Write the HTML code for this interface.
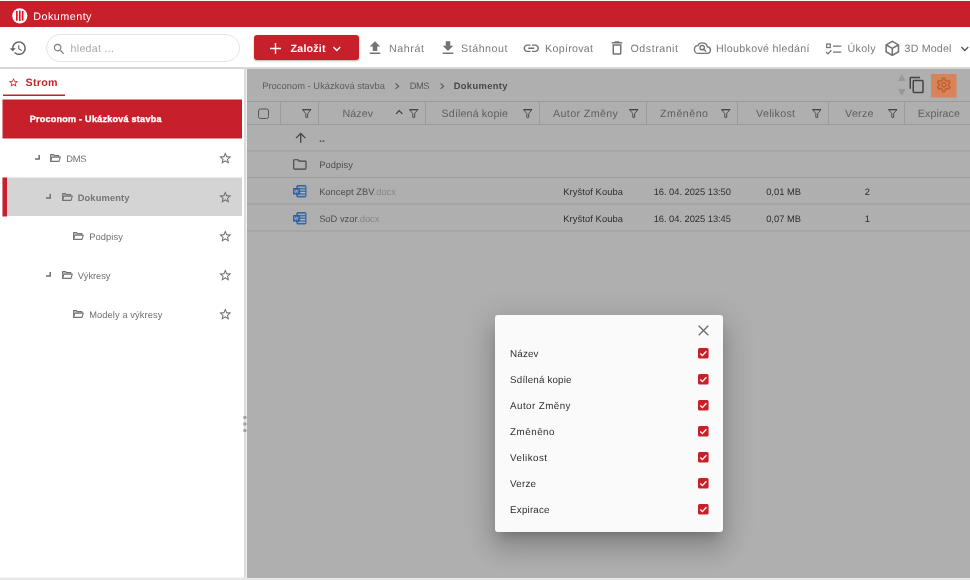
<!DOCTYPE html>
<html lang="cs">
<head>
<meta charset="utf-8">
<title>Dokumenty</title>
<style>
html,body{margin:0;padding:0;background:#fff;}
body{width:970px;height:580px;overflow:hidden;font-family:"Liberation Sans",Arial,sans-serif;text-rendering:geometricPrecision;}
#app{position:relative;width:970px;height:580px;overflow:hidden;background:#fff;will-change:transform;}
.t{position:absolute;white-space:nowrap;line-height:1;display:block;}
.i{position:absolute;display:block;overflow:visible;}
.b{position:absolute;display:block;}
.sb{-webkit-text-stroke:0.35px currentColor;}
</style>
</head>
<body>
<div id="app">

<svg class="i" style="left:0;top:0;width:970px;height:580px" viewBox="0 0 970 580" shape-rendering="geometricPrecision">
<rect x="0" y="1" width="970" height="26" fill="#c8202a"/>
<rect x="0" y="0" width="970" height="1" fill="#f4f8f8"/>
<rect x="3" y="94.5" width="62" height="1.5" fill="#c8202a"/>
<rect x="2.5" y="99.5" width="239.5" height="39" fill="#c8202a"/>
<rect x="2.5" y="177.5" width="239.5" height="38.5" fill="#d4d4d4"/>
<rect x="2.5" y="177.5" width="4.5" height="39" fill="#c8202a"/>
<rect x="244" y="69" width="2" height="509" fill="#dcdcdc"/>
<rect x="246" y="69" width="1" height="509" fill="#efefef"/>
<rect x="247" y="69" width="723" height="509" fill="#afafaf"/>
<rect x="247" y="68" width="723" height="1" fill="#c9c9c9"/>
<rect x="931" y="74" width="25.5" height="23.5" fill="#d9835a"/>
<rect x="247" y="101" width="723" height="1" fill="#9b9b9b"/>
<rect x="247" y="124" width="723" height="1" fill="#9b9b9b"/>
<rect x="247" y="150.5" width="723" height="1" fill="#9b9b9b"/>
<rect x="247" y="177" width="723" height="1" fill="#9b9b9b"/>
<rect x="247" y="203.5" width="723" height="1" fill="#9b9b9b"/>
<rect x="247" y="230.5" width="723" height="1" fill="#9b9b9b"/>
<rect x="280" y="101" width="1" height="23" fill="#9b9b9b"/>
<rect x="318" y="101" width="1" height="23" fill="#9b9b9b"/>
<rect x="425" y="101" width="1" height="23" fill="#9b9b9b"/>
<rect x="539" y="101" width="1" height="23" fill="#9b9b9b"/>
<rect x="646" y="101" width="1" height="23" fill="#9b9b9b"/>
<rect x="737" y="101" width="1" height="23" fill="#9b9b9b"/>
<rect x="828" y="101" width="1" height="23" fill="#9b9b9b"/>
<rect x="904" y="101" width="1" height="23" fill="#9b9b9b"/>
<rect x="0" y="577.6" width="970" height="2.4" fill="#e7e7e7"/>
<rect x="247" y="576.8" width="723" height="0.8" fill="#a6a6a6"/>
</svg>
<svg class="i" style="left:12px;top:8px;width:15.6px;height:15.6px" viewBox="0 0 16 16"><circle cx="8" cy="8" r="7.8" fill="#fff"/><rect x="4.1" y="3" width="1.7" height="10" fill="#e8111a"/><rect x="7.1" y="2.6" width="1.7" height="10.8" fill="#e8111a"/><rect x="10.1" y="3" width="1.7" height="10" fill="#e8111a"/></svg>
<span class="t" style="left:33.27px;top:12px;font-size:10.8px;letter-spacing:0.456px;color:#fff;">Dokumenty</span>
<svg class="i" style="left:9.2px;top:38.6px;width:18.4px;height:18.4px;" viewBox="0 0 24 24" fill="#666"><path d="M13 3c-4.97 0-9 4.03-9 9H1l3.89 3.89.07.14L9 12H6c0-3.87 3.13-7 7-7s7 3.13 7 7-3.13 7-7 7c-1.93 0-3.68-.79-4.94-2.06l-1.42 1.42C8.27 19.99 10.51 21 13 21c4.97 0 9-4.03 9-9s-4.03-9-9-9zm-1 5v5l4.28 2.54.72-1.21-3.5-2.08V8H12z"/></svg>
<div class="b" style="left:46px;top:34px;width:192px;height:25.5px;border:1px solid #e4e4e4;border-radius:14px;box-sizing:content-box;background:#fff;"></div>
<svg class="i" style="left:52.1px;top:41.6px;width:14.2px;height:14.2px;" viewBox="0 0 24 24" fill="#7c7c7c"><path d="M15.5 14h-.79l-.28-.27C15.41 12.59 16 11.11 16 9.5 16 5.91 13.09 3 9.5 3S3 5.91 3 9.5 5.91 16 9.5 16c1.61 0 3.09-.59 4.23-1.57l.27.28v.79l5 4.99L20.49 19l-4.99-5zm-6 0C7.01 14 5 11.99 5 9.5S7.01 5 9.5 5 14 7.01 14 9.5 11.99 14 9.5 14z"/></svg>
<span class="t" style="left:70.57px;top:44px;font-size:10.67px;letter-spacing:0.270px;color:#a9a9a9;">hledat ...</span>
<div class="b" style="left:254px;top:35px;width:104.5px;height:24.5px;background:#c8202a;border-radius:3px;box-shadow:0 1px 2.5px rgba(0,0,0,.22),0 1px 1px rgba(0,0,0,.10);"></div>
<svg class="i" style="left:270px;top:43px;width:11px;height:11px" viewBox="0 0 11 11" fill="none" stroke="#fff" stroke-width="1.350"><path d="M5.500 0V11M0 5.500H11"/></svg>
<span class="t" style="left:290.57px;top:44px;font-size:10.67px;letter-spacing:0.196px;color:#fff;font-weight:bold;">Založit</span>
<svg class="i" style="left:329.3px;top:40.6px;width:15.6px;height:15.6px;" viewBox="0 0 24 24" fill="#fff"><path d="M16.59 8.59L12 13.17 7.41 8.59 6 10l6 6 6-6z"/></svg>
<svg class="i" style="left:366.3px;top:38.7px;width:18px;height:18px;" viewBox="0 0 24 24" fill="#737373"><path d="M9 16h6v-6h4l-7-7-7 7h4zm-4 2h14v2H5z"/></svg>
<span class="t" style="left:389.07px;top:44px;font-size:10.67px;letter-spacing:0.587px;color:#7a7a7a;">Nahrát</span>
<svg class="i" style="left:438.5px;top:38.5px;width:18px;height:18px;" viewBox="0 0 24 24" fill="#737373"><path d="M19 9h-4V3H9v6H5l7 7 7-7zM5 18v2h14v-2H5z"/></svg>
<span class="t" style="left:461.07px;top:44px;font-size:10.67px;letter-spacing:0.535px;color:#7a7a7a;">Stáhnout</span>
<svg class="i" style="left:522px;top:39px;width:18.5px;height:18.5px;" viewBox="0 0 24 24" fill="#737373"><path d="M3.9 12c0-1.71 1.39-3.1 3.1-3.1h4V7H7c-2.76 0-5 2.24-5 5s2.24 5 5 5h4v-1.9H7c-1.71 0-3.1-1.39-3.1-3.1zM8 13h8v-2H8v2zm9-6h-4v1.9h4c1.71 0 3.1 1.39 3.1 3.1s-1.39 3.1-3.1 3.1h-4V17h4c2.76 0 5-2.24 5-5s-2.24-5-5-5z"/></svg>
<span class="t" style="left:545.07px;top:44px;font-size:10.67px;letter-spacing:0.286px;color:#7a7a7a;">Kopírovat</span>
<svg class="i" style="left:608.3px;top:39.3px;width:18px;height:18px;" viewBox="0 0 24 24" fill="#737373"><path d="M6 19c0 1.1.9 2 2 2h8c1.1 0 2-.9 2-2V7H6v12zM8 9h8v10H8V9zm7.5-5l-1-1h-5l-1 1H5v2h14V4z"/></svg>
<span class="t" style="left:630.57px;top:44px;font-size:10.67px;letter-spacing:0.521px;color:#7a7a7a;">Odstranit</span>
<svg class="i" style="left:693px;top:38px;width:19px;height:19px" viewBox="0 0 24 24" fill="none" stroke="#737373" stroke-width="1.700" stroke-linecap="round" stroke-linejoin="round"><path d="M6.5 19.5h11.2c2.4 0 4.3-1.9 4.3-4.2 0-2.2-1.7-4-3.9-4.2C17.5 8.400 14.900 6.200 11.800 6.200 9.200 6.200 7 7.600 6.100 9.700 3.500 9.800 1.800 11.900 1.800 14.400c0 2.800 2.100 5.100 4.700 5.100z"/><circle cx="11.6" cy="12.2" r="2.7"/><path d="M13.6 14.3l2.600 2.600"/></svg>
<span class="t" style="left:716.07px;top:44px;font-size:10.67px;letter-spacing:0.317px;color:#7a7a7a;">Hloubkové hledání</span>
<svg class="i" style="left:825px;top:41.800px;width:17px;height:14px" viewBox="0 0 17 14" fill="none" stroke="#737373" stroke-width="1.250"><rect x="1.7" y="2" width="3.600" height="3.600"/><path d="M8 4h8.300M8 10h8.300" /><path d="M1 10l1.900 1.900L6.400 8.300" stroke-linejoin="round"/></svg>
<span class="t" style="left:847.57px;top:44px;font-size:10.67px;letter-spacing:0.320px;color:#7a7a7a;">Úkoly</span>
<svg class="i" style="left:882.5px;top:38.6px;width:18.6px;height:18.6px;" viewBox="0 0 24 24" fill="#737373"><path d="M21,16.5C21,16.88 20.79,17.21 20.47,17.38L12.57,21.82C12.41,21.94 12.21,22 12,22C11.79,22 11.59,21.94 11.43,21.82L3.53,17.38C3.21,17.21 3,16.88 3,16.5V7.5C3,7.12 3.21,6.79 3.53,6.62L11.43,2.18C11.59,2.06 11.79,2 12,2C12.21,2 12.41,2.06 12.57,2.18L20.47,6.62C20.79,6.79 21,7.12 21,7.5V16.5M12,4.15L6.04,7.5L12,10.85L17.96,7.5L12,4.15M5,15.91L11,19.29V12.58L5,9.21V15.91M19,15.91V9.21L13,12.58V19.29L19,15.91Z"/></svg>
<span class="t" style="left:904.57px;top:44px;font-size:10.67px;letter-spacing:0.185px;color:#7a7a7a;">3D Model</span>
<svg class="i" style="left:956.7px;top:40.5px;width:15.6px;height:15.6px;" viewBox="0 0 24 24" fill="#555"><path d="M16.59 8.59L12 13.17 7.41 8.59 6 10l6 6 6-6z"/></svg>
<div class="b" style="left:0;top:67px;width:970px;height:2px;background:linear-gradient(#dcdcdc,#d4d4d4);"></div>
<svg class="i" style="left:8.3px;top:76.9px;width:11px;height:11px;" viewBox="0 0 24 24" fill="#c8202a"><path d="M22 9.24l-7.19-.62L12 2 9.19 8.63 2 9.24l5.46 4.73L5.82 21 12 17.27 18.18 21l-1.63-7.03L22 9.24zM12 15.4l-3.76 2.27 1-4.28-3.32-2.88 4.38-.38L12 6.1l1.71 4.04 4.38.38-3.32 2.88 1 4.28L12 15.4z"/></svg>
<span class="t" style="left:25.57px;top:78px;font-size:10.67px;letter-spacing:0.283px;color:#c8202a;font-weight:bold;">Strom</span>
<span class="t sb" style="left:29.64px;top:115px;font-size:9px;letter-spacing:0.271px;color:#fff;font-weight:bold;">Proconom - Ukázková stavba</span>
<svg class="i" style="left:34.8px;top:155.1px;width:5px;height:5px" viewBox="0 0 5 5" fill="none" stroke="#6f6f6f" stroke-width="1.500"><path d="M0 3.900H4.200V0"/></svg>
<svg class="i" style="left:50.4px;top:154.3px;width:11px;height:8px" viewBox="0 0 11 8" stroke="#747474" fill="#747474"><path d="M0.600 0.600H3.600L4.500 1.600H8.800V3.100H1.900L0.600 7.400Z" stroke="none" fill-opacity="0.300"/><path d="M0.600 7.400V0.600H3.600L4.500 1.600H8.800V3.000" fill="none" stroke-width="1.100" stroke-linejoin="round"/><path d="M0.600 7.400L1.900 3.100H10.300L9.000 7.400Z" fill="none" stroke-width="1.100" stroke-linejoin="round"/></svg>
<span class="t" style="left:66.13px;top:155px;font-size:9.33px;letter-spacing:-0.197px;color:#707070;">DMS</span>
<svg class="i" style="left:217.5px;top:150.9px;width:14.6px;height:14.6px;" viewBox="0 0 24 24" fill="#6b6b6b"><path d="M22 9.24l-7.19-.62L12 2 9.19 8.63 2 9.24l5.46 4.73L5.82 21 12 17.27 18.18 21l-1.63-7.03L22 9.24zM12 15.4l-3.76 2.27 1-4.28-3.32-2.88 4.38-.38L12 6.1l1.71 4.04 4.38.38-3.32 2.88 1 4.28L12 15.4z"/></svg>
<svg class="i" style="left:46.3px;top:194.1px;width:5px;height:5px" viewBox="0 0 5 5" fill="none" stroke="#6f6f6f" stroke-width="1.500"><path d="M0 3.900H4.200V0"/></svg>
<svg class="i" style="left:61.9px;top:193.3px;width:11px;height:8px" viewBox="0 0 11 8" stroke="#747474" fill="#747474"><path d="M0.600 0.600H3.600L4.500 1.600H8.800V3.100H1.900L0.600 7.400Z" stroke="none" fill-opacity="0.300"/><path d="M0.600 7.400V0.600H3.600L4.500 1.600H8.800V3.000" fill="none" stroke-width="1.100" stroke-linejoin="round"/><path d="M0.600 7.400L1.900 3.100H10.300L9.000 7.400Z" fill="none" stroke-width="1.100" stroke-linejoin="round"/></svg>
<span class="t" style="left:77.63px;top:194px;font-size:9.33px;letter-spacing:0.129px;color:#757575;font-weight:bold;">Dokumenty</span>
<svg class="i" style="left:217.5px;top:189.9px;width:14.6px;height:14.6px;" viewBox="0 0 24 24" fill="#6b6b6b"><path d="M22 9.24l-7.19-.62L12 2 9.19 8.63 2 9.24l5.46 4.73L5.82 21 12 17.27 18.18 21l-1.63-7.03L22 9.24zM12 15.4l-3.76 2.27 1-4.28-3.32-2.88 4.38-.38L12 6.1l1.71 4.04 4.38.38-3.32 2.88 1 4.28L12 15.4z"/></svg>
<svg class="i" style="left:73.4px;top:232.3px;width:11px;height:8px" viewBox="0 0 11 8" stroke="#747474" fill="#747474"><path d="M0.600 0.600H3.600L4.500 1.600H8.800V3.100H1.900L0.600 7.400Z" stroke="none" fill-opacity="0.300"/><path d="M0.600 7.400V0.600H3.600L4.500 1.600H8.800V3.000" fill="none" stroke-width="1.100" stroke-linejoin="round"/><path d="M0.600 7.400L1.900 3.100H10.300L9.000 7.400Z" fill="none" stroke-width="1.100" stroke-linejoin="round"/></svg>
<span class="t" style="left:89.13px;top:233px;font-size:9.33px;letter-spacing:0.108px;color:#707070;">Podpisy</span>
<svg class="i" style="left:217.5px;top:228.9px;width:14.6px;height:14.6px;" viewBox="0 0 24 24" fill="#6b6b6b"><path d="M22 9.24l-7.19-.62L12 2 9.19 8.63 2 9.24l5.46 4.73L5.82 21 12 17.27 18.18 21l-1.63-7.03L22 9.24zM12 15.4l-3.76 2.27 1-4.28-3.32-2.88 4.38-.38L12 6.1l1.71 4.04 4.38.38-3.32 2.88 1 4.28L12 15.4z"/></svg>
<svg class="i" style="left:46.3px;top:272.1px;width:5px;height:5px" viewBox="0 0 5 5" fill="none" stroke="#6f6f6f" stroke-width="1.500"><path d="M0 3.900H4.200V0"/></svg>
<svg class="i" style="left:61.9px;top:271.3px;width:11px;height:8px" viewBox="0 0 11 8" stroke="#747474" fill="#747474"><path d="M0.600 0.600H3.600L4.500 1.600H8.800V3.100H1.900L0.600 7.400Z" stroke="none" fill-opacity="0.300"/><path d="M0.600 7.400V0.600H3.600L4.500 1.600H8.800V3.000" fill="none" stroke-width="1.100" stroke-linejoin="round"/><path d="M0.600 7.400L1.900 3.100H10.300L9.000 7.400Z" fill="none" stroke-width="1.100" stroke-linejoin="round"/></svg>
<span class="t" style="left:77.63px;top:272px;font-size:9.33px;letter-spacing:-0.057px;color:#707070;">Výkresy</span>
<svg class="i" style="left:217.5px;top:267.9px;width:14.6px;height:14.6px;" viewBox="0 0 24 24" fill="#6b6b6b"><path d="M22 9.24l-7.19-.62L12 2 9.19 8.63 2 9.24l5.46 4.73L5.82 21 12 17.27 18.18 21l-1.63-7.03L22 9.24zM12 15.4l-3.76 2.27 1-4.28-3.32-2.88 4.38-.38L12 6.1l1.71 4.04 4.38.38-3.32 2.88 1 4.28L12 15.4z"/></svg>
<svg class="i" style="left:73.4px;top:310.3px;width:11px;height:8px" viewBox="0 0 11 8" stroke="#747474" fill="#747474"><path d="M0.600 0.600H3.600L4.500 1.600H8.800V3.100H1.900L0.600 7.400Z" stroke="none" fill-opacity="0.300"/><path d="M0.600 7.400V0.600H3.600L4.500 1.600H8.800V3.000" fill="none" stroke-width="1.100" stroke-linejoin="round"/><path d="M0.600 7.400L1.900 3.100H10.300L9.000 7.400Z" fill="none" stroke-width="1.100" stroke-linejoin="round"/></svg>
<span class="t" style="left:89.13px;top:311px;font-size:9.33px;letter-spacing:0.085px;color:#707070;">Modely a výkresy</span>
<svg class="i" style="left:217.5px;top:306.9px;width:14.6px;height:14.6px;" viewBox="0 0 24 24" fill="#6b6b6b"><path d="M22 9.24l-7.19-.62L12 2 9.19 8.63 2 9.24l5.46 4.73L5.82 21 12 17.27 18.18 21l-1.63-7.03L22 9.24zM12 15.4l-3.76 2.27 1-4.28-3.32-2.88 4.38-.38L12 6.1l1.71 4.04 4.38.38-3.32 2.88 1 4.28L12 15.4z"/></svg>
<svg class="i" style="left:240px;top:412px;width:10px;height:24px" viewBox="0 0 10 24" fill="#a2a2a2"><circle cx="4.900" cy="5.500" r="1.800"/><circle cx="4.900" cy="12" r="1.800"/><circle cx="4.900" cy="18.500" r="1.800"/></svg>
<span class="t" style="left:262.13px;top:82px;font-size:9.33px;letter-spacing:0.039px;color:#5b5b5b;">Proconom - Ukázková stavba</span>
<svg class="i" style="left:394.9px;top:82.5px;width:4.400px;height:6.400px" viewBox="0 0 4.4 6.4" fill="none" stroke="#5b5b5b" stroke-width="1.150"><path d="M0.600 0.500L3.600 3.200 0.600 5.900"/></svg>
<span class="t" style="left:409.63px;top:82px;font-size:9.33px;letter-spacing:-0.447px;color:#5b5b5b;">DMS</span>
<svg class="i" style="left:439.9px;top:82.5px;width:4.400px;height:6.400px" viewBox="0 0 4.4 6.4" fill="none" stroke="#5b5b5b" stroke-width="1.150"><path d="M0.600 0.500L3.600 3.200 0.600 5.900"/></svg>
<span class="t" style="left:453.63px;top:82px;font-size:9.33px;letter-spacing:0.379px;color:#474747;font-weight:bold;">Dokumenty</span>
<svg class="i" style="left:897.5px;top:74px;width:7.5px;height:22px" viewBox="0 0 7.5 22" fill="#989898"><path d="M3.750 0L7.500 7H0z"/><path d="M0 15h7.500L3.750 22z"/></svg>
<svg class="i" style="left:908.4px;top:76.2px;width:18px;height:18px;" viewBox="0 0 24 24" fill="#454545"><path d="M16 1H4c-1.1 0-2 .9-2 2v14h2V3h12V1zm3 4H8c-1.1 0-2 .9-2 2v14c0 1.1.9 2 2 2h11c1.1 0 2-.9 2-2V7c0-1.1-.9-2-2-2zm0 16H8V7h11v14z"/></svg>
<svg class="i" style="left:935.2px;top:76.3px;width:17.6px;height:17.6px;" viewBox="0 0 24 24" fill="#c4602f"><path d="M19.43 12.98c.04-.32.07-.64.07-.98 0-.34-.03-.66-.07-.98l2.11-1.65c.19-.15.24-.42.12-.64l-2-3.46c-.09-.16-.26-.25-.44-.25-.06 0-.12.01-.17.03l-2.49 1c-.52-.4-1.08-.73-1.69-.98l-.38-2.65C14.46 2.18 14.25 2 14 2h-4c-.25 0-.46.18-.49.42l-.38 2.65c-.61.25-1.17.59-1.69.98l-2.49-1c-.06-.02-.12-.03-.18-.03-.17 0-.34.09-.43.25l-2 3.46c-.13.22-.07.49.12.64l2.11 1.65c-.04.32-.07.65-.07.98 0 .33.03.66.07.98l-2.11 1.65c-.19.15-.24.42-.12.64l2 3.46c.09.16.26.25.44.25.06 0 .12-.01.17-.03l2.49-1c.52.4 1.08.73 1.69.98l.38 2.65c.03.24.24.42.49.42h4c.25 0 .46-.18.49-.42l.38-2.65c.61-.25 1.17-.59 1.69-.98l2.49 1c.06.02.12.03.18.03.17 0 .34-.09.43-.25l2-3.46c.12-.22.07-.49-.12-.64l-2.11-1.65zm-1.98-1.71c.04.31.05.52.05.73 0 .21-.02.43-.05.73l-.14 1.13.89.7 1.08.84-.7 1.21-1.27-.51-1.04-.42-.9.68c-.43.32-.84.56-1.25.73l-1.06.43-.16 1.13-.2 1.35h-1.4l-.19-1.35-.16-1.13-1.06-.43c-.43-.18-.83-.41-1.23-.71l-.91-.7-1.06.43-1.27.51-.7-1.21 1.08-.84.89-.7-.14-1.13c-.03-.31-.05-.54-.05-.74s.02-.43.05-.73l.14-1.13-.89-.7-1.08-.84.7-1.21 1.27.51 1.04.42.9-.68c.43-.32.84-.56 1.25-.73l1.06-.43.16-1.13.2-1.35h1.39l.19 1.35.16 1.13 1.06.43c.43.18.83.41 1.23.71l.91.7 1.06-.43 1.27-.51.7 1.21-1.07.85-.89.7.14 1.13zM12 8c-2.21 0-4 1.79-4 4s1.79 4 4 4 4-1.79 4-4-1.79-4-4-4zm0 6c-1.1 0-2-.9-2-2s.9-2 2-2 2 .9 2 2-.9 2-2 2z"/></svg>
<svg class="i" style="left:257px;top:107px;width:13px;height:13px" viewBox="0 0 13 13" fill="none" stroke="#555" stroke-width="1"><rect x="1.500" y="2" width="10" height="9.500" rx="2"/></svg>
<svg class="i" style="left:301.6px;top:108.800px;width:9.500px;height:9.500px" viewBox="0 0 9.5 9.5" fill="none" stroke="#444" stroke-width="1" stroke-linejoin="round"><path d="M0.600 0.700H8.900L5.700 4.600V8.300Q4.750 9.000 3.800 8.300V4.600Z" stroke-width="0.900"/><path d="M0.600 0.600H8.900" stroke-width="1.200"/></svg>
<span class="t" style="left:342.57px;top:109px;font-size:10.67px;letter-spacing:0.054px;color:#5f5f5f;">Název</span>
<svg class="i" style="left:392.3px;top:105.0px;width:14.4px;height:14.4px;" viewBox="0 0 24 24" fill="#3f3f3f"><path d="M12 8l-6 6 1.41 1.41L12 10.83l4.59 4.58L18 14z"/></svg>
<svg class="i" style="left:408.6px;top:108.800px;width:9.500px;height:9.500px" viewBox="0 0 9.5 9.5" fill="none" stroke="#444" stroke-width="1" stroke-linejoin="round"><path d="M0.600 0.700H8.900L5.700 4.600V8.300Q4.750 9.000 3.800 8.300V4.600Z" stroke-width="0.900"/><path d="M0.600 0.600H8.900" stroke-width="1.200"/></svg>
<span class="t" style="left:441.57px;top:109px;font-size:10.67px;letter-spacing:0.150px;color:#5f5f5f;">Sdílená kopie</span>
<svg class="i" style="left:523.1px;top:108.800px;width:9.500px;height:9.500px" viewBox="0 0 9.5 9.5" fill="none" stroke="#444" stroke-width="1" stroke-linejoin="round"><path d="M0.600 0.700H8.900L5.700 4.600V8.300Q4.750 9.000 3.800 8.300V4.600Z" stroke-width="0.900"/><path d="M0.600 0.600H8.900" stroke-width="1.200"/></svg>
<span class="t" style="left:553.07px;top:109px;font-size:10.67px;letter-spacing:0.388px;color:#5f5f5f;">Autor Změny</span>
<svg class="i" style="left:629.3000000000001px;top:108.800px;width:9.500px;height:9.500px" viewBox="0 0 9.5 9.5" fill="none" stroke="#444" stroke-width="1" stroke-linejoin="round"><path d="M0.600 0.700H8.900L5.700 4.600V8.300Q4.750 9.000 3.800 8.300V4.600Z" stroke-width="0.900"/><path d="M0.600 0.600H8.900" stroke-width="1.200"/></svg>
<span class="t" style="left:660.07px;top:109px;font-size:10.67px;letter-spacing:0.481px;color:#5f5f5f;">Změněno</span>
<svg class="i" style="left:720.8000000000001px;top:108.800px;width:9.500px;height:9.500px" viewBox="0 0 9.5 9.5" fill="none" stroke="#444" stroke-width="1" stroke-linejoin="round"><path d="M0.600 0.700H8.900L5.700 4.600V8.300Q4.750 9.000 3.800 8.300V4.600Z" stroke-width="0.900"/><path d="M0.600 0.600H8.900" stroke-width="1.200"/></svg>
<span class="t" style="left:756.07px;top:109px;font-size:10.67px;letter-spacing:0.313px;color:#5f5f5f;">Velikost</span>
<svg class="i" style="left:812.3000000000001px;top:108.800px;width:9.500px;height:9.500px" viewBox="0 0 9.5 9.5" fill="none" stroke="#444" stroke-width="1" stroke-linejoin="round"><path d="M0.600 0.700H8.900L5.700 4.600V8.300Q4.750 9.000 3.800 8.300V4.600Z" stroke-width="0.900"/><path d="M0.600 0.600H8.900" stroke-width="1.200"/></svg>
<span class="t" style="left:845.07px;top:109px;font-size:10.67px;letter-spacing:0.294px;color:#5f5f5f;">Verze</span>
<svg class="i" style="left:888.3000000000001px;top:108.800px;width:9.500px;height:9.500px" viewBox="0 0 9.5 9.5" fill="none" stroke="#444" stroke-width="1" stroke-linejoin="round"><path d="M0.600 0.700H8.900L5.700 4.600V8.300Q4.750 9.000 3.800 8.300V4.600Z" stroke-width="0.900"/><path d="M0.600 0.600H8.900" stroke-width="1.200"/></svg>
<span class="t" style="left:917.87px;top:109px;font-size:10.67px;letter-spacing:0.092px;color:#5f5f5f;">Expirace</span>
<svg class="i" style="left:292.6px;top:130.3px;width:15.4px;height:15.4px;" viewBox="0 0 24 24" fill="#444"><path d="M4 12l1.41 1.41L11 7.83V20h2V7.83l5.58 5.59L20 12l-8-8-8 8z"/></svg>
<span class="t" style="left:318.96px;top:134px;font-size:11px;letter-spacing:0.078px;color:#555;font-weight:bold;">..</span>
<svg class="i" style="left:293.400px;top:159.400px;width:13.700px;height:10.800px" viewBox="0 0 14.5 11.5" fill="none" stroke="#444" stroke-width="1.200" stroke-linejoin="round"><path d="M0.700 1.700c0-.5.400-.9.900-.9h3.600l1.300 1.400h6.400c.5 0 .9.400.9.900v6.800c0 .5-.4.900-.9.900H1.600c-.5 0-.9-.4-.9-.9z"/></svg>
<span class="t" style="left:319.13px;top:161px;font-size:9.33px;letter-spacing:0.108px;color:#4e4e4e;">Podpisy</span>
<svg class="i" style="left:293.3px;top:185.3px;width:13.500px;height:12.500px" viewBox="0 0 13.5 12.5"><rect x="3.800" y="0.500" width="9.200" height="11.500" rx="0.900" fill="#4470a6" stroke="#2f5e9c" stroke-width="0.900"/><path d="M5 2.200h7.300M7.300 4.900h5M7.300 7.600h5M5 10.300h7.300" stroke="#b6bac4" stroke-width="1.050"/><rect x="0" y="2.900" width="6.600" height="6.700" rx="0.500" fill="#2f5f9f"/><path d="M1.400 4.500l.9 3.500 1-3.100 1 3.100.9-3.500" fill="none" stroke="#9db2d2" stroke-width="0.800"/></svg>
<span class="t" style="left:319.13px;top:188px;font-size:9.33px;letter-spacing:0.028px;color:#4e4e4e;">Koncept ZBV<span style="color:#878787">.docx</span></span>
<svg class="i" style="left:293.3px;top:212px;width:13.500px;height:12.500px" viewBox="0 0 13.5 12.5"><rect x="3.800" y="0.500" width="9.200" height="11.500" rx="0.900" fill="#4470a6" stroke="#2f5e9c" stroke-width="0.900"/><path d="M5 2.200h7.300M7.300 4.900h5M7.300 7.600h5M5 10.300h7.300" stroke="#b6bac4" stroke-width="1.050"/><rect x="0" y="2.900" width="6.600" height="6.700" rx="0.500" fill="#2f5f9f"/><path d="M1.400 4.500l.9 3.500 1-3.100 1 3.100.9-3.500" fill="none" stroke="#9db2d2" stroke-width="0.800"/></svg>
<span class="t" style="left:319.13px;top:215px;font-size:9.33px;letter-spacing:0.016px;color:#4e4e4e;">SoD vzor<span style="color:#878787">.docx</span></span>
<span class="t" style="left:563.13px;top:188px;font-size:9.33px;letter-spacing:0.103px;color:#2e2e2e;">Kryštof Kouba</span>
<span class="t" style="left:653.63px;top:188px;font-size:9.33px;letter-spacing:-0.028px;color:#2e2e2e;">16. 04. 2025 13:50</span>
<span class="t" style="left:766.13px;top:188px;font-size:9.33px;letter-spacing:0.016px;color:#2e2e2e;">0,01 MB</span>
<span class="t" style="left:864.63px;top:188px;font-size:9.33px;letter-spacing:0.651px;color:#2e2e2e;">2</span>
<span class="t" style="left:563.13px;top:215px;font-size:9.33px;letter-spacing:0.103px;color:#2e2e2e;">Kryštof Kouba</span>
<span class="t" style="left:653.63px;top:215px;font-size:9.33px;letter-spacing:-0.028px;color:#2e2e2e;">16. 04. 2025 13:45</span>
<span class="t" style="left:766.13px;top:215px;font-size:9.33px;letter-spacing:0.016px;color:#2e2e2e;">0,07 MB</span>
<span class="t" style="left:864.63px;top:215px;font-size:9.33px;letter-spacing:0.651px;color:#2e2e2e;">1</span>
<div class="b" style="left:495px;top:315px;width:228px;height:216.500px;background:#fafafa;border-radius:3px;box-shadow:0 7px 10px -5px rgba(0,0,0,.2),0 16px 25px 2px rgba(0,0,0,.14),0 6px 31px 5px rgba(0,0,0,.12);"></div>
<svg class="i" style="left:698px;top:325px;width:11px;height:11px" viewBox="0 0 11 11" fill="none" stroke="#6a6a6a" stroke-width="1.300"><path d="M0.700 0.700l9.600 9.600M10.300 0.700L0.700 10.300"/></svg>
<span class="t" style="left:510.11px;top:350px;font-size:9.8px;letter-spacing:0.151px;color:#2f2f2f;">Název</span>
<svg class="i" style="left:697.500px;top:348.2px;width:10.600px;height:10.600px" viewBox="0 0 10.6 10.6"><rect width="10.600" height="10.600" rx="1.600" fill="#c8202a"/><path d="M2.300 5.500l2.100 2.100 4-4.300" fill="none" stroke="#fff" stroke-width="1.300"/></svg>
<span class="t" style="left:510.11px;top:376px;font-size:9.8px;letter-spacing:0.166px;color:#2f2f2f;">Sdílená kopie</span>
<svg class="i" style="left:697.500px;top:374.2px;width:10.600px;height:10.600px" viewBox="0 0 10.6 10.6"><rect width="10.600" height="10.600" rx="1.600" fill="#c8202a"/><path d="M2.300 5.500l2.100 2.100 4-4.300" fill="none" stroke="#fff" stroke-width="1.300"/></svg>
<span class="t" style="left:510.11px;top:402px;font-size:9.8px;letter-spacing:0.429px;color:#2f2f2f;">Autor Změny</span>
<svg class="i" style="left:697.500px;top:400.2px;width:10.600px;height:10.600px" viewBox="0 0 10.6 10.6"><rect width="10.600" height="10.600" rx="1.600" fill="#c8202a"/><path d="M2.300 5.500l2.100 2.100 4-4.300" fill="none" stroke="#fff" stroke-width="1.300"/></svg>
<span class="t" style="left:510.11px;top:428px;font-size:9.8px;letter-spacing:0.497px;color:#2f2f2f;">Změněno</span>
<svg class="i" style="left:697.500px;top:426.2px;width:10.600px;height:10.600px" viewBox="0 0 10.6 10.6"><rect width="10.600" height="10.600" rx="1.600" fill="#c8202a"/><path d="M2.300 5.500l2.100 2.100 4-4.300" fill="none" stroke="#fff" stroke-width="1.300"/></svg>
<span class="t" style="left:510.11px;top:454px;font-size:9.8px;letter-spacing:0.444px;color:#2f2f2f;">Velikost</span>
<svg class="i" style="left:697.500px;top:452.2px;width:10.600px;height:10.600px" viewBox="0 0 10.6 10.6"><rect width="10.600" height="10.600" rx="1.600" fill="#c8202a"/><path d="M2.300 5.500l2.100 2.100 4-4.300" fill="none" stroke="#fff" stroke-width="1.300"/></svg>
<span class="t" style="left:510.11px;top:480px;font-size:9.8px;letter-spacing:0.205px;color:#2f2f2f;">Verze</span>
<svg class="i" style="left:697.500px;top:478.2px;width:10.600px;height:10.600px" viewBox="0 0 10.6 10.6"><rect width="10.600" height="10.600" rx="1.600" fill="#c8202a"/><path d="M2.300 5.500l2.100 2.100 4-4.300" fill="none" stroke="#fff" stroke-width="1.300"/></svg>
<span class="t" style="left:510.11px;top:506px;font-size:9.8px;letter-spacing:0.179px;color:#2f2f2f;">Expirace</span>
<svg class="i" style="left:697.500px;top:504.2px;width:10.600px;height:10.600px" viewBox="0 0 10.6 10.6"><rect width="10.600" height="10.600" rx="1.600" fill="#c8202a"/><path d="M2.300 5.500l2.100 2.100 4-4.300" fill="none" stroke="#fff" stroke-width="1.300"/></svg>
</div>
</body>
</html>
